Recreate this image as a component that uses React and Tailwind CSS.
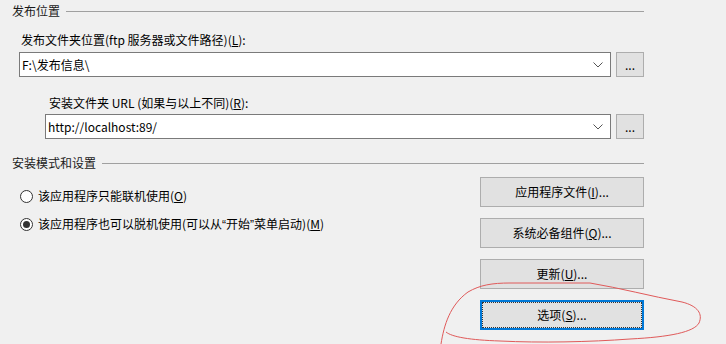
import React from 'react';

const font = { fontFamily: '"Noto Sans CJK SC", "Noto Sans", sans-serif' };

function GroupHeader({ title }) {
  return (
    <div className="flex items-center h-[22px] pl-[12px]">
      <span className="text-[12px] leading-[16px] text-[#1a1a1a]">{title}</span>
      <div className="flex-1 h-px bg-[#a0a0a0] ml-[6px]" />
    </div>
  );
}

function Combo({ value, width }) {
  return (
    <div className={`flex items-center h-[25px] bg-white border border-[#7a7a7a] ${width}`}>
      <span className="flex-1 pl-[2px] text-[12px] leading-[16px] text-black">{value}</span>
      <svg className="w-[10px] h-[6px] mr-[7px]" viewBox="0 0 10 6" fill="none">
        <path d="M0.5 0.5 L5 5 L9.5 0.5" stroke="#555" strokeWidth="1" />
      </svg>
    </div>
  );
}

function Browse() {
  return (
    <button className="w-[28px] h-[25px] ml-[5px] bg-[#e1e1e1] border border-[#adadad] text-[12px] leading-[10px] text-black flex items-center justify-center">
      ...
    </button>
  );
}

function Radio({ checked, children }) {
  return (
    <div className="flex items-center h-[16px] pl-[20px]">
      <span className="w-[13px] h-[13px] rounded-full border border-[#333] bg-white flex items-center justify-center">
        {checked && <span className="w-[7px] h-[7px] rounded-full bg-[#333]" />}
      </span>
      <span className="ml-[5px] text-[12px] leading-[16px] text-black">{children}</span>
    </div>
  );
}

function Btn({ focused, children }) {
  return (
    <button
      className={`w-[164px] h-[30px] bg-[#e1e1e1] text-[12px] leading-[16px] text-black flex items-center justify-center ${
        focused ? 'border-2 border-[#0078d7]' : 'border border-[#adadad]'
      }`}
    >
      {focused ? (
        <span className="w-full h-full flex items-center justify-center border border-dotted border-[#333]">{children}</span>
      ) : (
        children
      )}
    </button>
  );
}

// narrow latin quotes like the Windows UI font
function Q({ children }) {
  return <span style={{ fontFamily: '"Liberation Sans", sans-serif' }}>{children}</span>;
}

export default function App() {
  return (
    <div className="relative w-[726px] h-[344px] bg-[#f0f0f0] overflow-hidden" style={font}>
      <div className="w-[644px]">
        <GroupHeader title="发布位置" />

        <div className="mt-[10px] pl-[21px] h-[16px] text-[12px] leading-[16px] text-black">
          发布文件夹位置(ftp 服务器或文件路径)(<u>L</u>):
        </div>
        <div className="mt-[4px] pl-[19px] flex items-center">
          <Combo value="F:\发布信息\" width="w-[592px]" />
          <Browse />
        </div>

        <div className="mt-[18px] pl-[49px] h-[16px] text-[12px] leading-[16px] text-black">
          安装文件夹 URL (如果与以上不同)(<u>R</u>):
        </div>
        <div className="mt-[3px] pl-[45px] flex items-center">
          <Combo value="http://localhost:89/" width="w-[566px]" />
          <Browse />
        </div>

        <div className="mt-[13px]">
          <GroupHeader title="安装模式和设置" />
        </div>

        <div className="flex">
          <div className="flex-1 flex flex-col gap-[12px] mt-[14px]">
            <Radio>该应用程序只能联机使用(<u>O</u>)</Radio>
            <Radio checked>
              该应用程序也可以脱机使用(可以从<Q>“</Q>开始<Q>”</Q>菜单启动)(<u>M</u>)
            </Radio>
          </div>
          <div className="flex flex-col gap-[11px] mt-[3px]">
            <Btn>应用程序文件(<u>I</u>)...</Btn>
            <Btn>系统必备组件(<u>Q</u>)...</Btn>
            <Btn>更新(<u>U</u>)...</Btn>
            <Btn focused>选项(<u>S</u>)...</Btn>
          </div>
        </div>
      </div>

      {/* hand-drawn red circle */}
      <svg className="absolute inset-0 pointer-events-none" width="726" height="344" viewBox="0 0 726 344" fill="none">
        <path
          d="M441 344 C444 325 450 305 468 292 C480 285 492 283 510 283 L590 283 C620 288 650 296 682 302 C698 306 703 314 699 323 C694 332 670 337 630 339 C590 342 540 343 500 341 C470 340 452 337 446 332"
          stroke="#e05a5a"
          strokeWidth="1"
        />
      </svg>
    </div>
  );
}
